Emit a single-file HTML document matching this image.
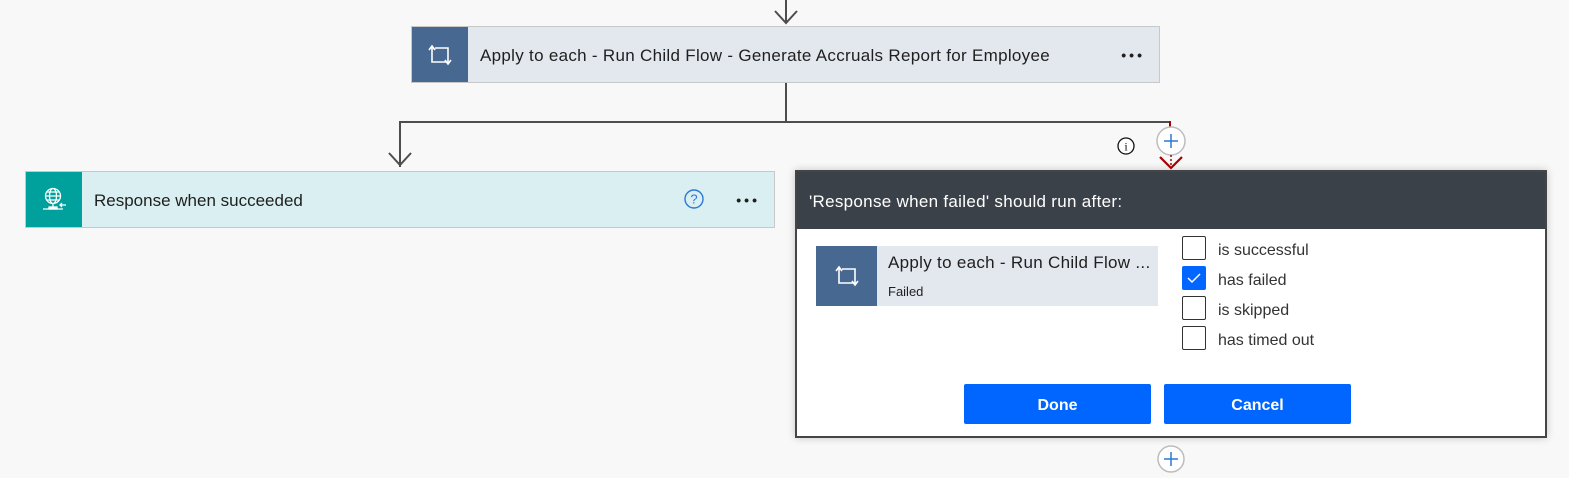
<!DOCTYPE html>
<html><head><meta charset="utf-8"><style>
*{box-sizing:border-box;margin:0;padding:0}
body{width:1569px;height:478px;background:#f8f8f8;position:relative;overflow:hidden;font-family:"Liberation Sans",sans-serif;color:#1f1f1f}
.abs{position:absolute}
.line{position:absolute;background:#4d4d4d}
.card{position:absolute;border:1px solid #c8c8c8;display:flex;align-items:center}
.ico{height:100%;display:flex;align-items:center;justify-content:center}
.dots{position:absolute;font-size:14px;letter-spacing:3px;font-weight:bold}
.cb{position:absolute;left:1182px;width:24px;height:24px;border:1px solid #333;border-radius:2px;background:#fff}
.lbl{position:absolute;left:1218px;font-size:16px;color:#333}
.btn{position:absolute;top:384px;height:40px;padding-top:3px;background:#0066ff;border-radius:2px;color:#fff;font-weight:bold;font-size:16px;display:flex;align-items:center;justify-content:center}
</style></head><body>
<div class="line" style="left:785px;top:0;width:2px;height:22px"></div>
<svg class="abs" style="left:773px;top:8px" width="26" height="18"><path d="M2 3 L13 15 L24 3" fill="none" stroke="#4d4d4d" stroke-width="2"/></svg>
<div class="card" style="left:411px;top:26px;width:749px;height:57px;background:#e3e7ee">
 <div class="ico" style="width:56px;background:#476890">
  <svg width="28" height="22" viewBox="0 0 28 22"><path d="M3 6 L6 2 L9 6 M6 2 V18 H20 M25 16 L22 20 L19 16 M22 20 V4 H9" fill="none" stroke="#fff" stroke-width="1.6"/></svg>
 </div>
 <div style="margin-left:12px;font-size:17px;letter-spacing:0.3px;padding-top:2px">Apply to each - Run Child Flow - Generate Accruals Report for Employee</div>
 <div class="dots" style="right:14px;top:20px">•••</div>
</div>
<div class="line" style="left:785px;top:83px;width:2px;height:39px"></div>
<div class="line" style="left:399px;top:121px;width:772px;height:2px"></div>
<div class="line" style="left:399px;top:121px;width:2px;height:46px"></div>
<svg class="abs" style="left:387px;top:150px" width="26" height="18"><path d="M2 3 L13 15 L24 3" fill="none" stroke="#4d4d4d" stroke-width="2"/></svg>
<div class="abs" style="left:1169px;top:121px;width:2px;height:8px;background:#a80000"></div>
<svg class="abs" style="left:1116px;top:136px" width="20" height="20"><circle cx="10" cy="10" r="8" fill="#fff" stroke="#111" stroke-width="1.3"/><text x="10" y="14.5" font-size="12" text-anchor="middle" font-family="Liberation Serif" fill="#111">i</text></svg>
<svg class="abs" style="left:1155px;top:125px" width="32" height="32"><circle cx="16" cy="16" r="14" fill="#fff" stroke="#bdbdbd" stroke-width="1.5"/><path d="M16 9 V23 M9 16 H23" stroke="#2b79d6" stroke-width="1.5"/></svg>
<svg class="abs" style="left:1158px;top:155px" width="26" height="16"><path d="M2 2 L13 13 L24 2" fill="none" stroke="#a80000" stroke-width="2.2"/><path d="M13 0 V10" stroke="#a80000" stroke-width="1.5" stroke-dasharray="2 2"/></svg>
<div class="card" style="left:25px;top:171px;width:750px;height:57px;background:#d9eff1">
 <div class="ico" style="width:56px;background:#00a09d">
  <svg width="28" height="28" viewBox="0 0 28 28" fill="none" stroke="#fff" stroke-width="1.3"><circle cx="13" cy="10" r="7.5"/><ellipse cx="13" cy="10" rx="3.5" ry="7.5"/><path d="M5.5 10 H20.5 M7 6 H19 M7 14 H19 M13 17.5 V21"/><rect x="9" y="21" width="8" height="2" fill="#fff"/><path d="M3 23 H23 M26 19 H20 M22 17 L20 19 L22 21"/></svg>
 </div>
 <div style="margin-left:12px;font-size:17px;padding-top:2px">Response when succeeded</div>
 <svg class="abs" style="left:657px;top:16px" width="22" height="22"><circle cx="11" cy="11" r="9" fill="none" stroke="#2b79d6" stroke-width="1.4"/><text x="11" y="15.5" font-size="13" text-anchor="middle" fill="#2b79d6" font-family="Liberation Sans">?</text></svg>
 <div class="dots" style="right:14px;top:20px">•••</div>
</div>
<div class="abs" style="left:795px;top:170px;width:752px;height:268px;border:2px solid #454545;background:#fff;box-shadow:0 0 8px rgba(0,0,0,.2)">
 <div style="height:57px;background:#3b4149;color:#fff;font-size:17px;letter-spacing:0.3px;padding:20px 0 0 12px">'Response when failed' should run after:</div>
</div>
<div class="abs" style="left:816px;top:246px;width:342px;height:60px;background:#e3e7ee;display:flex">
 <div class="ico" style="width:61px;background:#476890">
  <svg width="28" height="22" viewBox="0 0 28 22"><path d="M3 6 L6 2 L9 6 M6 2 V18 H20 M25 16 L22 20 L19 16 M22 20 V4 H9" fill="none" stroke="#fff" stroke-width="1.6"/></svg>
 </div>
 <div style="padding:7px 0 0 11px">
  <div style="font-size:17px;letter-spacing:0.3px">Apply to each - Run Child Flow ...</div>
  <div style="font-size:13px;margin-top:11px">Failed</div>
 </div>
</div>
<div class="cb" style="top:236px"></div>
<div class="cb" style="top:266px;background:#0066ff;border-color:#0066ff"><svg width="22" height="22"><path d="M5 11 L9 15 L17 7" fill="none" stroke="#fff" stroke-width="1.5"/></svg></div>
<div class="cb" style="top:296px"></div>
<div class="cb" style="top:326px"></div>
<div class="lbl" style="top:242px">is successful</div>
<div class="lbl" style="top:272px">has failed</div>
<div class="lbl" style="top:302px">is skipped</div>
<div class="lbl" style="top:332px">has timed out</div>
<div class="btn" style="left:964px;width:187px">Done</div>
<div class="btn" style="left:1164px;width:187px">Cancel</div>
<svg class="abs" style="left:1155px;top:443px" width="32" height="32"><circle cx="16" cy="16" r="13" fill="#fff" stroke="#bdbdbd" stroke-width="1.5"/><path d="M16 9 V23 M9 16 H23" stroke="#2b79d6" stroke-width="1.5"/></svg>
</body></html>
